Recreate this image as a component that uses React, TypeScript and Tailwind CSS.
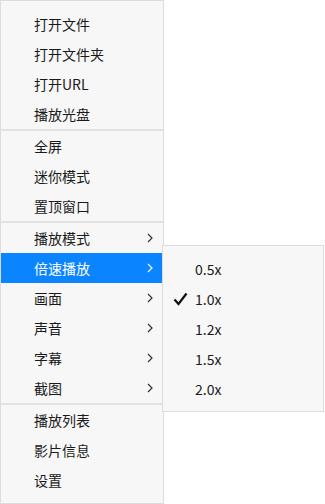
import React from "react";

const font = { fontFamily: '"Noto Sans CJK SC", "Noto Sans", sans-serif' };

function Chevron({ white }: { white?: boolean }) {
  return (
    <svg width="6" height="10" viewBox="0 0 6 10" className="mr-[10px]">
      <path d="M1 1 L5 5 L1 9" fill="none" stroke={white ? "#ffffff" : "#333333"} strokeWidth="1.2" />
    </svg>
  );
}

function Row({ label, sub, active }: { label: string; sub?: boolean; active?: boolean }) {
  return (
    <div
      className={`h-[30px] flex items-center justify-between pl-[33px] text-[14px] ${
        active ? "bg-[#0a84ff] text-white" : "text-[#1a1a1a]"
      }`}
    >
      <span>{label}</span>
      {sub && <Chevron white={active} />}
    </div>
  );
}

function Sep() {
  return <div className="h-[2px] bg-[#e2e2e2]" />;
}

export default function App() {
  return (
    <div className="relative w-[325px] h-[504px] bg-white" style={font}>
      <div className="w-[164px] h-[504px] border border-[#dcdcdc] bg-[#f7f7f7] flex flex-col">
        <div className="pt-[8px]">
          <Row label="打开文件" />
          <Row label="打开文件夹" />
          <Row label="打开URL" />
          <Row label="播放光盘" />
        </div>
        <Sep />
        <div>
          <Row label="全屏" />
          <Row label="迷你模式" />
          <Row label="置顶窗口" />
        </div>
        <Sep />
        <div>
          <Row label="播放模式" sub />
          <Row label="倍速播放" sub active />
          <Row label="画面" sub />
          <Row label="声音" sub />
          <Row label="字幕" sub />
          <Row label="截图" sub />
        </div>
        <Sep />
        <div className="pb-[8px]">
          <Row label="播放列表" />
          <Row label="影片信息" />
          <Row label="设置" />
        </div>
      </div>
      <div className="absolute left-[162px] top-[245px] w-[162px] h-[167px] border border-[#dcdcdc] bg-[#f7f7f7] pt-[8px]">
        {["0.5x", "1.0x", "1.2x", "1.5x", "2.0x"].map((v) => (
          <div key={v} className="relative h-[30px] flex items-center pl-[32px] text-[14px] text-[#1a1a1a]">
            {v === "1.0x" && (
              <svg width="15" height="14" viewBox="0 0 15 14" className="absolute left-[10px] top-[8px]">
                <path d="M1.5 7.5 L5.5 12 L13.5 1.5" fill="none" stroke="#111111" strokeWidth="2.2" />
              </svg>
            )}
            <span>{v}</span>
          </div>
        ))}
      </div>
    </div>
  );
}
